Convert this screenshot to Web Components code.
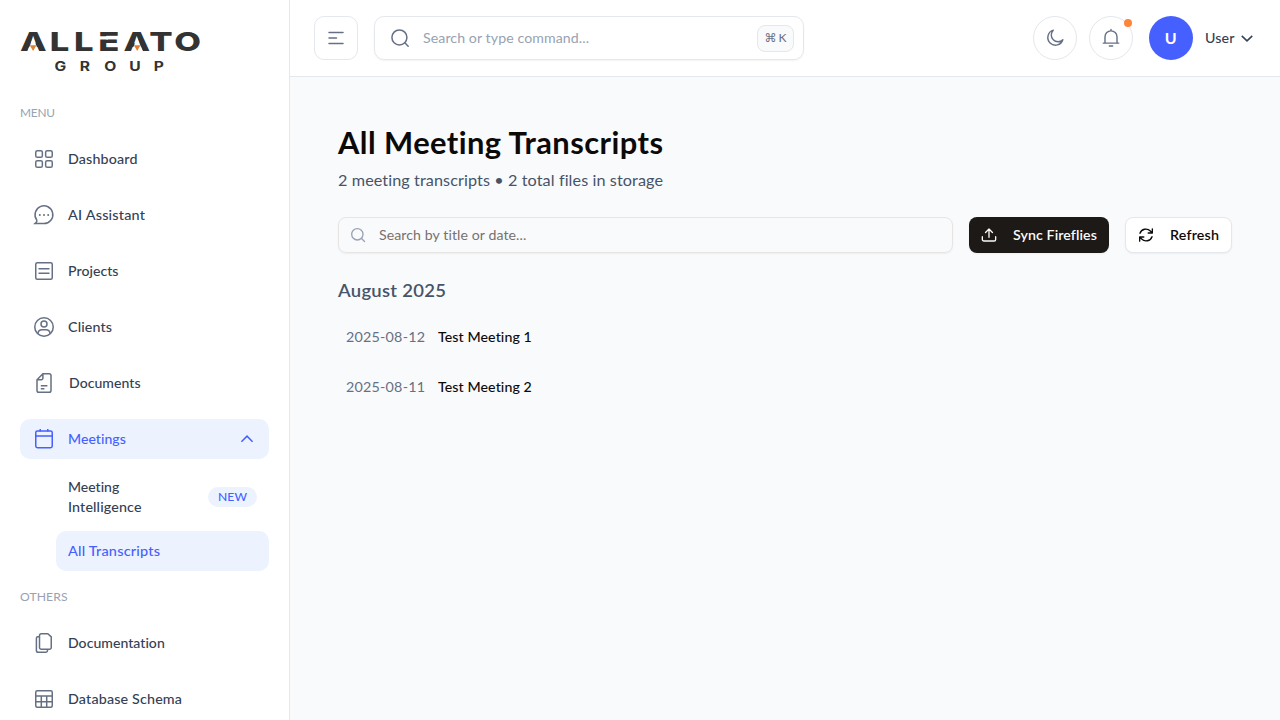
<!DOCTYPE html>
<html lang="en">
<head>
<meta charset="utf-8">
<title>All Meeting Transcripts</title>
<style>
body{margin:0;font-family:Lato,"Noto Sans",sans-serif;font-size:14px;line-height:20px;color:#344054;background:#f9fafc;height:720px;overflow:hidden}
</style>
</head>
<body>
<app-shell></app-shell>
<script>
const define=(name,html,after)=>{
  const t=document.createElement('template');
  t.innerHTML=html;
  customElements.define(name,class extends HTMLElement{
    constructor(){super();this.attachShadow({mode:'open'});}
    connectedCallback(){
      if(this.ready)return;this.ready=true;
      this.shadowRoot.append(t.content.cloneNode(true));
      if(after)after.call(this,this.shadowRoot);
    }
  });
};

const icons={
  grid:'<rect x="3.75" y="3.75" width="6.6" height="6.6" rx="1.6"/><rect x="13.65" y="3.75" width="6.6" height="6.6" rx="1.6"/><rect x="3.75" y="13.65" width="6.6" height="6.6" rx="1.6"/><rect x="13.65" y="13.65" width="6.6" height="6.6" rx="1.6"/>',
  chat:'<path d="M2.9 20.6H12A8.9 8.9 0 1 0 4.7 16.9Q5.3 18.2 4.3 19.2L2.9 20.6Z"/><g fill="currentColor" stroke="none"><circle cx="7.8" cy="12" r="1"/><circle cx="12" cy="12" r="1"/><circle cx="16.2" cy="12" r="1"/></g>',
  list:'<rect x="3.75" y="3.75" width="16.5" height="16.5" rx="1.5"/><path d="M6.5 9.7h11M6.5 14.3h11"/>',
  user:'<circle cx="12" cy="12" r="9.25"/><circle cx="12" cy="9.1" r="3"/><path d="M6 18.9v-.7a4 4 0 0 1 4-3.4h4a4 4 0 0 1 4 3.4v.7"/>',
  file:'<path d="M10.9 2.75h6.3a1.8 1.8 0 0 1 1.8 1.8v14.9a1.8 1.8 0 0 1-1.8 1.8H6.8A1.8 1.8 0 0 1 5 19.45V8.7zM10.9 2.75V7.2a1.5 1.5 0 0 1-1.5 1.5H5M8.8 14.7h6.6M8.8 17.7h3.6" stroke-width="1.5"/>',
  calendar:'<rect x="3.75" y="4.1" width="16.5" height="16.7" rx="1.7"/><path d="M3.75 9h16.5M8.2 2v2.5M15.8 2v2.5"/>',
  pages:'<path d="M9.3 2.75h6.5l3.45 3.2v10.6a1.8 1.8 0 0 1-1.8 1.8H9.3a1.8 1.8 0 0 1-1.8-1.8v-12a1.8 1.8 0 0 1 1.8-1.8zM7.5 5.7H5.9a1.5 1.5 0 0 0-1.5 1.5v12.2a1.8 1.8 0 0 0 1.8 1.8h7.5a1.8 1.8 0 0 0 1.8-1.8v-1" stroke-width="1.5"/>',
  table:'<rect x="3.75" y="3.75" width="16.5" height="16.5" rx="1.5"/><path d="M3.75 9h16.5M3.75 14.7h16.5M9.3 9v11.25M14.7 9v11.25"/>',
  up:'<path d="M5.3 15.2 12 8.6l6.7 6.6" stroke-width="1.8"/>',
  down:'<path d="M5 9.2 12 15.8l7-6.6" stroke-width="2"/>',
  menu:'<path d="M5 6.4h14M5 12h7.5M5 17.6h14" stroke-width="1.5" stroke-linecap="round"/>',
  search:'<circle cx="11.3" cy="11.3" r="9"/><path d="m17.8 17.8 4 4" stroke-linecap="round"/>',
  moon:'<path d="M9.9 2.6a9.2 9.2 0 1 0 11.5 11.5A7.9 7.9 0 0 1 9.9 2.6z" stroke-linejoin="round"/>',
  bell:'<path d="M4.8 18V10.6a7.2 7.2 0 0 1 14.4 0V18M2.7 18.1h18.6M12 1.8v1.6M10 21.6h4" stroke-linecap="round"/>',
  lens:'<circle cx="11" cy="11" r="8.5"/><path d="m17.3 17.3 4.5 4.5" stroke-linecap="round"/>',
  upload:'<path d="M12 15.5V3M6.8 8.2 12 3l5.2 5.2M2 14.5v4.2a2.3 2.3 0 0 0 2.3 2.3h15.4a2.3 2.3 0 0 0 2.3-2.3v-4.2" stroke-linecap="round" stroke-linejoin="round"/>',
  refresh:'<path d="M21.5 2.8v6.2h-6.2M2.5 21.2V15h6.2M3 9.5A9.3 9.3 0 0 1 18.5 6l3 3M2.5 15l3 3A9.3 9.3 0 0 0 21 14.5" stroke-linecap="round" stroke-linejoin="round"/>'
};

define('ui-icon','<style>:host{display:block;flex:none}svg{display:block;fill:none;stroke:currentColor}</style>',function(root){
  const s=this.getAttribute('size')||24;
  root.innerHTML+=`<svg width="${s}" height="${s}" viewBox="0 0 24 24" stroke-width="${this.getAttribute('weight')||1.5}">${icons[this.getAttribute('name')]}</svg>`;
});

/* One line of text that fills the given width, half by stretch and half by tracking. */
define('ui-label','<style>:host{display:block;flex:none;white-space:nowrap}span{display:inline-block;vertical-align:top;transform-origin:0 50%}</style><span><slot></slot></span>',function(root){
  const span=root.querySelector('span'),w=+this.getAttribute('w'),n=this.textContent.length;
  const natural=span.getBoundingClientRect().width,stretch=Math.sqrt(w/natural);
  span.style.letterSpacing=(w/stretch-natural)/(n-1)+'px';
  span.style.transform=`translateY(var(--rise,0px)) scaleX(${stretch})`;
  this.style.width=w+'px';
});

define('brand-logo',`<style>:host{display:block;height:39px}svg{display:block;overflow:visible}text{font-family:Inter,sans-serif;fill:#333}</style>
<svg width="180" height="39" viewBox="0 0 180 39">
<text transform="translate(0 19) scale(1.33 1)" font-size="26" font-weight="800" x="-0.1 22.4 40.6 58.9 77.9 97.2 116">ALLEATO</text>
<path fill="#fff" d="M13.1 6 19.1 20H7.1zM117.2 6l6 14h-12zM77 4.3h11v3.1h-11z"/>
<path fill="#e0812f" d="M9.8 13.2h6.6l-3.3 5.8zM113.9 13.2h6.6l-3.3 5.8z"/>
<text transform="translate(0 39) scale(1.25 1)" font-size="12.5" font-weight="700" x="27.7 47.8 67.5 87.4 107">GROUP</text>
</svg>`);

define('nav-item',`<style>:host{display:block}
.row{display:flex;align-items:center;gap:12px;height:40px;padding:0 12px;border-radius:10px;box-sizing:border-box;font-weight:500}
ui-icon{color:#667085}:host([active]) .row{background:#ecf3ff;color:#465fff}:host([active]) ui-icon{color:#465fff}
:host([nudge]) ui-label{margin-left:1px}.end{margin-left:auto}</style><div class="row"></div>`,function(root){
  const a=k=>this.getAttribute(k);
  root.querySelector('.row').innerHTML=`<ui-icon name="${a('icon')}"></ui-icon><ui-label w="${a('w')}">${a('label')}</ui-label>`+(this.hasAttribute('open')?'<ui-icon class="end" name="up" size="20"></ui-icon>':'');
});

define('nav-sub',`<style>:host{display:flex;align-items:center;justify-content:space-between;margin-left:36px;padding:10px 12px;border-radius:10px;font-weight:500}
:host([active]){background:#ecf3ff;color:#465fff}
::slotted([slot=badge]){background:#ecf3ff;color:#465fff;border-radius:10px;padding:0 10px;font-size:12px}</style>
<div><slot></slot></div><slot name="badge"></slot>`);

define('nav-group',`<style>:host{display:block}h2{margin:0 0 16px;font-size:12px;line-height:20px;font-weight:400;color:#98a2b3}
.items{display:flex;flex-direction:column;gap:16px}</style><h2><slot name="title"></slot></h2><div class="items"><slot></slot></div>`);

define('app-sidebar',`<style>:host{display:flex;flex-direction:column;box-sizing:border-box;width:290px;height:720px;padding:32px 20px 0;background:#fff;border-right:1px solid #e4e7ec;overflow:hidden}
brand-logo{margin-bottom:32px}nav{display:flex;flex-direction:column;gap:16px}.subs{display:flex;flex-direction:column;gap:4px;margin-top:8px}</style>
<brand-logo></brand-logo>
<nav>
<nav-group><ui-label slot="title" w="35">MENU</ui-label>
<nav-item icon="grid" label="Dashboard" w="69.5"></nav-item>
<nav-item icon="chat" label="AI Assistant" w="77"></nav-item>
<nav-item icon="list" label="Projects" w="50.5"></nav-item>
<nav-item icon="user" label="Clients" w="44"></nav-item>
<nav-item icon="file" label="Documents" w="71.5" nudge></nav-item>
<div><nav-item icon="calendar" label="Meetings" w="58" active open></nav-item>
<div class="subs"><nav-sub><ui-label w="51.5">Meeting</ui-label><ui-label w="73.5">Intelligence</ui-label><ui-label slot="badge" w="29">NEW</ui-label></nav-sub>
<nav-sub active><ui-label w="92">All Transcripts</ui-label></nav-sub></div></div>
</nav-group>
<nav-group><ui-label slot="title" w="47.5">OTHERS</ui-label>
<nav-item icon="pages" label="Documentation" w="97"></nav-item>
<nav-item icon="table" label="Database Schema" w="114"></nav-item></nav-group>
</nav>`);

define('round-button',`<style>:host{display:flex;align-items:center;justify-content:center;box-sizing:border-box;position:relative;width:44px;height:44px;border:1px solid #e4e7ec;border-radius:50%;background:#fff;color:#667085}
:host([square]){border-radius:10px}
:host([dot])::after{content:"";position:absolute;right:0;top:2px;width:8px;height:8px;border-radius:50%;background:#fd853a}</style><slot></slot>`);

define('app-header',`<style>:host{display:flex;align-items:center;box-sizing:border-box;height:77px;padding:0 24px;background:#fff;border-bottom:1px solid #e4e7ec}
.search{display:flex;align-items:center;box-sizing:border-box;width:430px;height:44px;margin-left:16px;padding:0 9px 0 15px;border:1px solid #e4e7ec;border-radius:10px;box-shadow:0 1px 2px rgba(16,24,40,.05);color:#98a2b3}
.search ui-icon{color:#667085;margin-right:13px}
kbd{display:flex;align-items:center;justify-content:center;gap:2px;box-sizing:border-box;margin-left:auto;width:37px;height:27px;border:1px solid #e4e7ec;border-radius:8px;background:#f9fafb;color:#667085;font-family:Lato,"DejaVu Sans",sans-serif;font-size:12px;line-height:18px}
.right{display:flex;align-items:center;margin-left:auto}round-button+round-button{margin-left:12px}
.avatar{display:flex;align-items:center;justify-content:center;width:44px;height:44px;margin:0 12px 0 16px;border-radius:50%;background:#465fff;color:#fff;font-size:16px;font-weight:700}
.avatar span{padding-bottom:1px}
.right>ui-label{font-weight:500;margin-right:4px}</style>
<round-button square><ui-icon name="menu" size="24"></ui-icon></round-button>
<div class="search"><ui-icon name="search" size="20" weight="1.8"></ui-icon><ui-label w="166">Search or type command...</ui-label><kbd><span>⌘</span><span>K</span></kbd></div>
<div class="right"><round-button><ui-icon name="moon" size="20" weight="1.7"></ui-icon></round-button>
<round-button dot><ui-icon name="bell" size="20" weight="1.7"></ui-icon></round-button>
<div class="avatar"><span>U</span></div><ui-label w="29.4">User</ui-label><ui-icon name="down" size="18"></ui-icon></div>`);

define('action-button',`<style>:host{display:flex;align-items:center;gap:16px;box-sizing:border-box;height:36px;padding:0 12px;border:1px solid #e4e7ec;border-radius:8px;background:#fff;color:#0c0a09;font-weight:600;box-shadow:0 1px 2px rgba(16,24,40,.05)}
:host([primary]){border:0;background:#1c1917;color:#fafaf9}</style><slot></slot>`);

define('meeting-row',`<style>:host{display:flex;align-items:center;height:50px;padding-left:8px}.date{width:92px;color:#667085}.name{font-weight:500;color:#0c0a09}</style>
<div class="date"><slot name="date"></slot></div><div class="name"><slot></slot></div>`);

define('transcripts-page',`<style>:host{display:block;padding:48px}
h1{margin:0 0 8px;font-size:30px;line-height:36px;font-weight:700;color:#0c0a09;--rise:-1px}
.sub{font-size:16px;line-height:24px;color:#475467;--rise:-1px}
.tools{display:flex;gap:16px;margin:24px 0}
.search{flex:1;display:flex;align-items:center;gap:13px;box-sizing:border-box;height:36px;padding:0 11px;border:1px solid #e7e5e4;border-radius:8px;color:#78716c;box-shadow:0 1px 2px rgba(16,24,40,.05)}
.search ui-icon{color:#98a2b3}
h2{margin:0 0 7px;font-size:18px;line-height:28px;font-weight:600;color:#475467;--rise:-1px}</style>
<h1><ui-label w="325.5">All Meeting Transcripts</ui-label></h1>
<div class="sub"><ui-label w="325">2 meeting transcripts • 2 total files in storage</ui-label></div>
<div class="tools"><div class="search"><ui-icon name="lens" size="16" weight="2"></ui-icon><ui-label w="147.5">Search by title or date...</ui-label></div>
<action-button primary><ui-icon name="upload" size="16" weight="2"></ui-icon><ui-label w="84">Sync Fireflies</ui-label></action-button>
<action-button><ui-icon name="refresh" size="16" weight="2"></ui-icon><ui-label w="49">Refresh</ui-label></action-button></div>
<h2><ui-label w="108">August 2025</ui-label></h2>
<meeting-row><ui-label slot="date" w="79">2025-08-12</ui-label><ui-label w="94">Test Meeting 1</ui-label></meeting-row>
<meeting-row><ui-label slot="date" w="79">2025-08-11</ui-label><ui-label w="94">Test Meeting 2</ui-label></meeting-row>`);

define('app-shell',`<style>:host{display:grid;grid-template-columns:290px 1fr;height:720px;overflow:hidden}</style>
<app-sidebar></app-sidebar><main><app-header></app-header><transcripts-page></transcripts-page></main>`);
</script>
</body>
</html>
